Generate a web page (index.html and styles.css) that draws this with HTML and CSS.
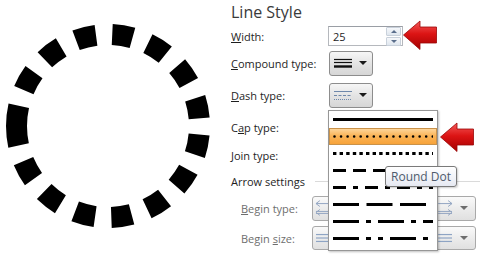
FILE: index.html
```html
<!DOCTYPE html>
<html lang="en">
<head>
    <meta charset="UTF-8">
    <title>Line Style</title>
    <link rel="stylesheet" href="styles.css">
</head>
<body>
<div class="page">
  <!-- Preview of the dashed outline -->
  <div class="figure">
    <svg width="220" height="255" viewBox="0 0 220 255">
      <path d="M16.5 126 A91.5 91.5 0 1 1 199.5 126 A91.5 91.5 0 1 1 16.5 126" fill="none" stroke="#000" stroke-width="21" stroke-dasharray="20.5 16.46"/>
    </svg>
  </div>

  <!-- Line Style panel -->
  <div class="panel">
    <h2 class="title">Line Style</h2>

    <div class="row row-width">
      <label class="label"><u>W</u>idth:</label>
      <div class="spin">
        <span class="spin-value">25</span>
        <span class="spin-btns">
          <span class="spin-btn"><span class="tri-up"></span></span>
          <span class="spin-btn"><span class="tri-down"></span></span>
        </span>
      </div>
    </div>

    <div class="row row-compound">
      <label class="label"><u>C</u>ompound type:</label>
      <div class="pick-btn">
        <svg width="18" height="14" viewBox="0 0 18 14">
          <line x1="0" y1="3.5" x2="18" y2="3.5" stroke="#111" stroke-width="1.2"/>
          <line x1="0" y1="6.5" x2="18" y2="6.5" stroke="#111" stroke-width="1.2"/>
          <line x1="0" y1="10.5" x2="18" y2="10.5" stroke="#111" stroke-width="2.4"/>
        </svg>
        <span class="caret"></span>
      </div>
    </div>

    <div class="row row-dash">
      <label class="label"><u>D</u>ash type:</label>
      <div class="pick-btn">
        <svg width="18" height="14" viewBox="0 0 18 14">
          <line x1="0" y1="3.5" x2="18" y2="3.5" stroke="#6f88aa" stroke-width="1"/>
          <line x1="0" y1="7.5" x2="18" y2="7.5" stroke="#6f88aa" stroke-width="1" stroke-dasharray="3 1.5"/>
          <line x1="0" y1="11.5" x2="18" y2="11.5" stroke="#6f88aa" stroke-width="1" stroke-dasharray="1 1"/>
        </svg>
        <span class="caret"></span>
      </div>
    </div>

    <div class="row row-cap">
      <label class="label">C<u>a</u>p type:</label>
    </div>

    <div class="row row-join">
      <label class="label"><u>J</u>oin type:</label>
    </div>

    <div class="row row-section">
      <span class="section-name">Arrow settings</span>
    </div>

    <div class="row row-begin-type">
      <label class="label sub"><u>B</u>egin type:</label>
      <div class="wide-btn">
        <svg class="wide-icon" width="142" height="18" viewBox="0 0 142 18">
          <g stroke="#93a6c2" stroke-width="1" fill="none">
            <line x1="2" y1="4.5" x2="16" y2="4.5"/>
            <polyline points="6,1.5 2,4.5 6,7.5"/>
            <line x1="2" y1="14.5" x2="16" y2="14.5"/>
            <line x1="2" y1="12.5" x2="16" y2="12.5"/>
            <polyline points="6,10.5 2,13.5 6,16.5"/>
            <line x1="126" y1="4.5" x2="140" y2="4.5"/>
            <polyline points="136,1.5 140,4.5 136,7.5"/>
            <line x1="126" y1="12.5" x2="140" y2="12.5"/>
            <line x1="126" y1="14.5" x2="140" y2="14.5"/>
            <polyline points="136,10.5 140,13.5 136,16.5"/>
          </g>
        </svg>
        <span class="caret dim"></span>
      </div>
    </div>

    <div class="row row-begin-size">
      <label class="label sub">Begin <u>s</u>ize:</label>
      <div class="wide-btn short">
        <svg class="wide-icon" width="142" height="14" viewBox="0 0 142 14">
          <g stroke="#8ea4c4" stroke-width="1.2">
            <line x1="2" y1="3.5" x2="16" y2="3.5"/>
            <line x1="2" y1="7" x2="16" y2="7"/>
            <line x1="2" y1="10.5" x2="16" y2="10.5"/>
            <line x1="126" y1="3.5" x2="140" y2="3.5"/>
            <line x1="126" y1="7" x2="140" y2="7"/>
            <line x1="126" y1="10.5" x2="140" y2="10.5"/>
          </g>
        </svg>
        <span class="caret dim"></span>
      </div>
    </div>
  </div>

  <!-- Open dash type list -->
  <div class="dash-list">
    <div class="dash-item"><svg width="100" height="17"><line x1="0" y1="8.5" x2="100" y2="8.5" stroke="#000" stroke-width="3"/></svg></div>
    <div class="dash-item selected"><svg width="100" height="15"><line x1="1.5" y1="7.5" x2="100" y2="7.5" stroke="#000" stroke-width="2.6" stroke-linecap="round" stroke-dasharray="0 6.55"/></svg></div>
    <div class="dash-item"><svg width="100" height="17"><line x1="0" y1="8.5" x2="100" y2="8.5" stroke="#000" stroke-width="3.2" stroke-dasharray="3.4 3.2"/></svg></div>
    <div class="dash-item"><svg width="100" height="17"><line x1="0" y1="8.5" x2="100" y2="8.5" stroke="#000" stroke-width="3" stroke-dasharray="13 7"/></svg></div>
    <div class="dash-item"><svg width="100" height="17"><line x1="0" y1="8.5" x2="100" y2="8.5" stroke="#000" stroke-width="3" stroke-dasharray="13 7 5 7"/></svg></div>
    <div class="dash-item"><svg width="100" height="17"><line x1="0" y1="8.5" x2="100" y2="8.5" stroke="#000" stroke-width="3" stroke-dasharray="26 7.5"/></svg></div>
    <div class="dash-item"><svg width="100" height="17"><line x1="0" y1="8.5" x2="100" y2="8.5" stroke="#000" stroke-width="3" stroke-dasharray="26 7 5 7"/></svg></div>
    <div class="dash-item"><svg width="100" height="17"><line x1="0" y1="8.5" x2="100" y2="8.5" stroke="#000" stroke-width="3" stroke-dasharray="26 7 5 7 5 7"/></svg></div>
  </div>

  <div class="tooltip">Round Dot</div>

  <!-- Callout arrows -->
  <svg class="callout callout-width" width="35" height="31" viewBox="0 0 35 31">
    <defs>
      <linearGradient id="redA" x1="0" y1="0" x2="0" y2="1">
        <stop offset="0" stop-color="#f45a5a"/>
        <stop offset="0.45" stop-color="#dc1414"/>
        <stop offset="1" stop-color="#a30000"/>
      </linearGradient>
    </defs>
    <polygon points="0.5,15 17,1 17,7 33.5,7 33.5,23 17,23 17,29.5" fill="url(#redA)" stroke="#9a0606" stroke-width="0.8"/>
  </svg>
  <svg class="callout callout-list" width="35" height="31" viewBox="0 0 35 31">
    <defs>
      <linearGradient id="redB" x1="0" y1="0" x2="0" y2="1">
        <stop offset="0" stop-color="#f45a5a"/>
        <stop offset="0.45" stop-color="#dc1414"/>
        <stop offset="1" stop-color="#a30000"/>
      </linearGradient>
    </defs>
    <polygon points="0.5,15 17,1 17,7 33.5,7 33.5,23 17,23 17,29.5" fill="url(#redB)" stroke="#9a0606" stroke-width="0.8"/>
  </svg>
</div>
</body>
</html>
```

FILE: styles.css
```css
body {
  margin: 0;
  background-color: #fff;
  font-family: "Open Sans", "Noto Sans", sans-serif;
  color: #1e1e1e;
}

.page {
  position: relative;
  display: flex;
  width: 480px;
  height: 255px;
  overflow: hidden;
}

.figure {
  width: 220px;
  height: 255px;
  flex-shrink: 0;
}

.figure svg {
  display: block;
}

/* Panel */
.panel {
  display: flex;
  flex-direction: column;
  padding-left: 11px;
  width: 249px;
}

.title {
  margin: 0;
  height: 24px;
  font-size: 16px;
  line-height: 24px;
  font-weight: normal;
  color: #3a3a3a;
}

.row {
  display: flex;
  align-items: center;
}

.row-width { height: 24px; }
.row-compound { height: 30px; }
.row-dash { height: 34px; }
.row-cap { height: 30px; }
.row-join { height: 26px; }
.row-section { height: 26px; }
.row-begin-type { height: 28px; }
.row-begin-size { height: 32px; }

.label {
  width: 97px;
  font-size: 11px;
  flex-shrink: 0;
}

.label.sub {
  width: 71px;
  padding-left: 10px;
  color: #6e6e6e;
}

.label u {
  text-underline-offset: 1px;
}

/* Width spinner */
.spin {
  display: flex;
  align-items: center;
  justify-content: space-between;
  box-sizing: border-box;
  width: 75px;
  height: 20px;
  border: 1px solid #b5b8bd;
  border-top-color: #9a9ea5;
  background-color: #fff;
  padding: 0 1px 0 4px;
}

.spin-value {
  font-size: 11px;
}

.spin-btns {
  display: flex;
  flex-direction: column;
  gap: 1px;
}

.spin-btn {
  display: flex;
  align-items: center;
  justify-content: center;
  width: 13px;
  height: 7px;
  background: linear-gradient(#f6f8fb, #dfe6ee);
  border: 1px solid #c9d1db;
  border-radius: 1px;
}

.tri-up {
  border-left: 3px solid transparent;
  border-right: 3px solid transparent;
  border-bottom: 3px solid #5a6e8c;
}

.tri-down {
  border-left: 3px solid transparent;
  border-right: 3px solid transparent;
  border-top: 3px solid #5a6e8c;
}

/* Picker buttons */
.pick-btn {
  display: flex;
  align-items: center;
  box-sizing: border-box;
  margin-left: 1px;
  width: 44px;
  height: 25px;
  padding: 0 0 0 4px;
  gap: 7px;
  border: 1px solid #8d8d8d;
  border-radius: 3px;
  background: linear-gradient(#f6f6f6, #e4e4e4 50%, #d6d6d6);
}

.pick-btn svg {
  display: block;
}

.caret {
  border-left: 4px solid transparent;
  border-right: 4px solid transparent;
  border-top: 4px solid #1a1a1a;
}

.caret.dim {
  border-top-color: #6d6d6d;
}

.section-name {
  font-size: 11px;
  color: #1e1e1e;
}

.row-section::after {
  content: "";
  flex: 1;
  height: 1px;
  margin-left: 10px;
  background-color: #dadada;
}

.wide-btn {
  display: flex;
  align-items: center;
  box-sizing: border-box;
  width: 164px;
  height: 25px;
  padding: 0 7px 0 1px;
  border: 1px solid #a9a9a9;
  border-radius: 3px;
  background: linear-gradient(#fafafa, #ececec 50%, #e0e0e0);
}

.wide-btn.short {
  height: 24px;
}

.wide-icon {
  display: block;
  margin-right: 6px;
}

/* Dropdown list */
.dash-list {
  position: absolute;
  left: 328px;
  top: 110px;
  width: 110px;
  height: 141px;
  box-sizing: border-box;
  border: 1px solid #979797;
  background-color: #fff;
  box-shadow: 1px 1px 2px rgba(0, 0, 0, 0.25);
}

.dash-item {
  display: flex;
  align-items: center;
  height: 17px;
  padding: 0 4px;
}

.dash-item svg {
  display: block;
}

.dash-item.selected {
  height: 15px;
  padding: 0 3px;
  border: 1px solid #c9924a;
  background: linear-gradient(#fdd59a, #fab457 45%, #f7a33a);
}

.tooltip {
  position: absolute;
  left: 385px;
  top: 166px;
  box-sizing: border-box;
  height: 21px;
  padding: 0 5px;
  white-space: nowrap;
  font-size: 12px;
  line-height: 19px;
  color: #4d5a6b;
  border: 1px solid #7a7a7a;
  border-radius: 3px;
  background: linear-gradient(#ffffff, #e6e9f2);
  box-shadow: 1px 1px 2px rgba(0, 0, 0, 0.2);
}

.callout {
  position: absolute;
  display: block;
}

.callout-width {
  left: 403px;
  top: 20px;
}

.callout-list {
  left: 440px;
  top: 122px;
}
```
